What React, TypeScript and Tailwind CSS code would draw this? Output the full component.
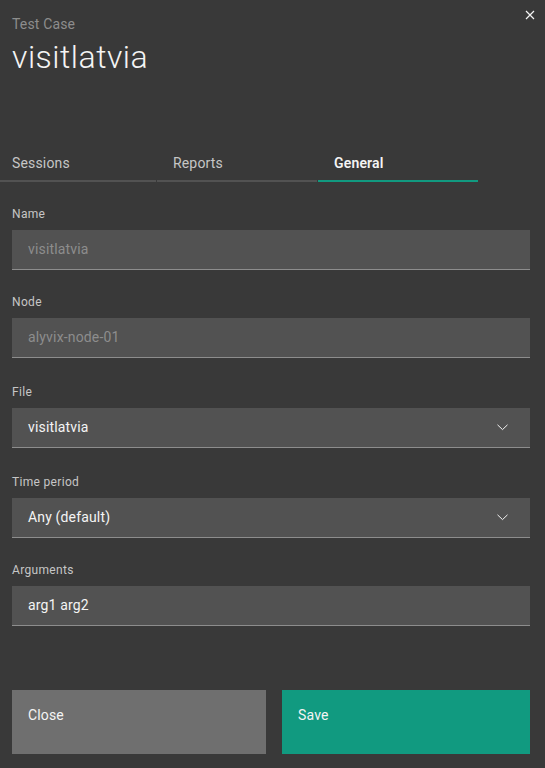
import { useState } from "react";

const FONT = "font-['Roboto','Liberation_Sans',sans-serif]";

function CloseIcon() {
  return (
    <svg width="10" height="10" viewBox="0 0 10 10" fill="none" stroke="#f4f4f4" strokeWidth="1.2">
      <path d="M1 1 L9 9 M9 1 L1 9" />
    </svg>
  );
}

function Chevron() {
  return (
    <svg width="11" height="7" viewBox="0 0 11 7" fill="none" stroke="#f4f4f4" strokeWidth="1">
      <path d="M0.5 0.8 L5.5 5.6 L10.5 0.8" />
    </svg>
  );
}

function Label({ children }: { children: string }) {
  return <div className="text-[12px] leading-4 tracking-[0.32px] text-[#c6c6c6] mb-2">{children}</div>;
}

function TextField({ label, value, disabled }: { label: string; value: string; disabled?: boolean }) {
  return (
    <div>
      <Label>{label}</Label>
      <div
        className={
          "h-10 bg-[#525252] border-b border-[#8d8d8d] flex items-center px-4 text-[14px] tracking-[0.16px] " +
          (disabled ? "text-[#8d8d8d]" : "text-[#f4f4f4]")
        }
      >
        {value}
      </div>
    </div>
  );
}

function SelectField({ label, value }: { label: string; value: string }) {
  return (
    <div className="pt-[2px]">
      <Label>{label}</Label>
      <div className="h-10 bg-[#525252] border-b border-[#8d8d8d] flex items-center justify-between pl-4 pr-[22px] text-[14px] tracking-[0.16px] text-[#f4f4f4]">
        <span>{value}</span>
        <Chevron />
      </div>
    </div>
  );
}

const TABS = ["Sessions", "Reports", "General"];

export default function App() {
  const [tab, setTab] = useState("General");

  return (
    <div className={`${FONT} relative w-full h-[768px] bg-[#393939] pl-3 pr-[15px] overflow-hidden`}>
      <button className="absolute top-[10px] right-[10px] p-0" aria-label="Close">
        <CloseIcon />
      </button>

      <header className="pt-[15px]">
        <div className="text-[14px] leading-[18px] tracking-[0.16px] text-[#8d8d8d] mb-1">Test Case</div>
        <h1 className="text-[32px] leading-10 font-light tracking-[0.5px] text-[#f4f4f4]">visitlatvia</h1>
      </header>

      <nav className="flex gap-px -ml-4 mt-[65px]">
        {TABS.map((t) => {
          const active = t === tab;
          return (
            <button
              key={t}
              onClick={() => setTab(t)}
              className={
                "w-40 text-left pl-4 pt-3 pb-2 text-[14px] leading-[18px] tracking-[0.16px] border-b-2 " +
                (active
                  ? "border-[#119a80] text-[#f4f4f4] font-semibold"
                  : "border-[#525252] text-[#c6c6c6]")
              }
            >
              {t}
            </button>
          );
        })}
      </nav>

      <form className="mt-6 flex flex-col">
        <TextField label="Name" value="visitlatvia" disabled />
        <div className="mt-6">
          <TextField label="Node" value="alyvix-node-01" disabled />
        </div>
        <div className="mt-6">
          <SelectField label="File" value="visitlatvia" />
        </div>
        <div className="mt-6">
          <SelectField label="Time period" value="Any (default)" />
        </div>
        <div className="mt-6">
          <TextField label="Arguments" value="arg1 arg2" />
        </div>

        <div className="mt-16 flex gap-4">
          <button type="button" className="w-[254px] h-16 bg-[#6f6f6f] text-left pl-4 pt-4 text-[14px] leading-[18px] tracking-[0.16px] text-[#f4f4f4] flex items-start">
            Close
          </button>
          <button type="button" className="w-[248px] h-16 bg-[#119a80] text-left pl-4 pt-4 text-[14px] leading-[18px] tracking-[0.16px] text-[#f4f4f4] flex items-start">
            Save
          </button>
        </div>
      </form>
    </div>
  );
}
